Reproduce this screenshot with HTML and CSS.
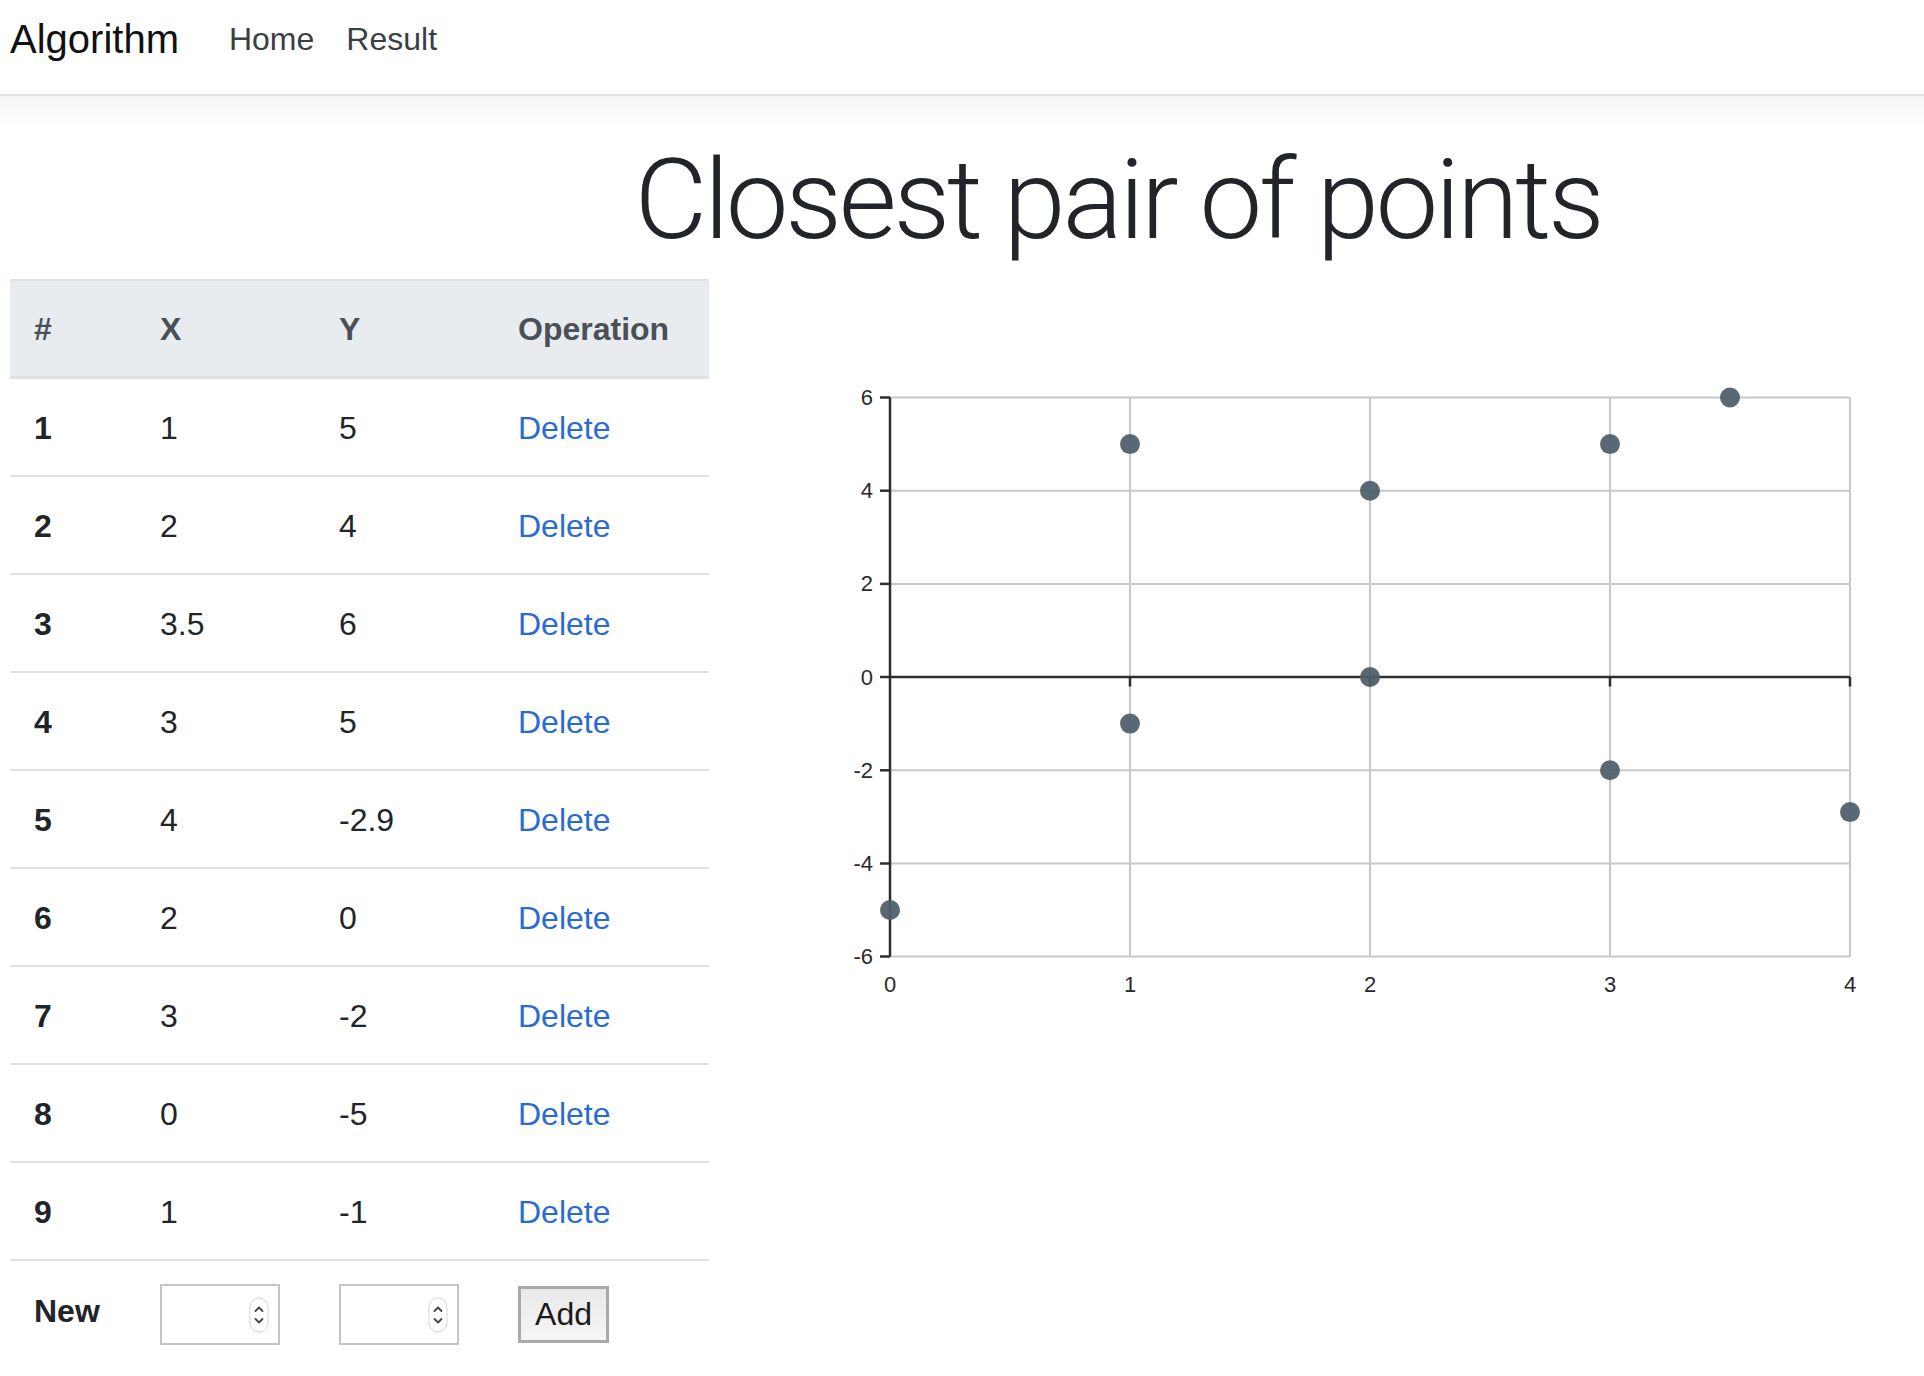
FILE: index.html
```html
<!DOCTYPE html>
<html lang="en">
<head>
    <meta charset="UTF-8">
    <meta name="viewport" content="width=device-width, initial-scale=1.0">
    <title>Closest pair of points</title>
    <link rel="stylesheet" href="styles.css">
</head>
<body>
    <nav class="navbar">
        <a class="brand" href="#">Algorithm</a>
        <a class="nav-link" href="#">Home</a>
        <a class="nav-link" href="#">Result</a>
    </nav>

    <main class="page">
        <h1 class="title">Closest pair of points</h1>

        <div class="content">
            <table class="points">
                <colgroup>
                    <col style="width: 126px">
                    <col style="width: 179px">
                    <col style="width: 179px">
                    <col style="width: 215px">
                </colgroup>
                <thead>
                    <tr>
                        <th>#</th>
                        <th>X</th>
                        <th>Y</th>
                        <th>Operation</th>
                    </tr>
                </thead>
                <tbody>
                    <tr><th>1</th><td>1</td><td>5</td><td><a href="#">Delete</a></td></tr>
                    <tr><th>2</th><td>2</td><td>4</td><td><a href="#">Delete</a></td></tr>
                    <tr><th>3</th><td>3.5</td><td>6</td><td><a href="#">Delete</a></td></tr>
                    <tr><th>4</th><td>3</td><td>5</td><td><a href="#">Delete</a></td></tr>
                    <tr><th>5</th><td>4</td><td>-2.9</td><td><a href="#">Delete</a></td></tr>
                    <tr><th>6</th><td>2</td><td>0</td><td><a href="#">Delete</a></td></tr>
                    <tr><th>7</th><td>3</td><td>-2</td><td><a href="#">Delete</a></td></tr>
                    <tr><th>8</th><td>0</td><td>-5</td><td><a href="#">Delete</a></td></tr>
                    <tr><th>9</th><td>1</td><td>-1</td><td><a href="#">Delete</a></td></tr>
                    <tr class="new-row">
                        <th>New</th>
                        <td>
                            <div class="num-input">
                                <input type="text" id="newX">
                                <svg class="spinner" width="20" height="36" viewBox="0 0 20 36">
                                    <rect x="1" y="1" width="18" height="34" rx="9" fill="#fff" stroke="#d6d6d6"/>
                                    <path d="M6.5 14 L10 10.5 L13.5 14 M6.5 22 L10 25.5 L13.5 22" fill="none" stroke="#444" stroke-width="1.8" stroke-linecap="round" stroke-linejoin="round"/>
                                </svg>
                            </div>
                        </td>
                        <td>
                            <div class="num-input">
                                <input type="text" id="newY">
                                <svg class="spinner" width="20" height="36" viewBox="0 0 20 36">
                                    <rect x="1" y="1" width="18" height="34" rx="9" fill="#fff" stroke="#d6d6d6"/>
                                    <path d="M6.5 14 L10 10.5 L13.5 14 M6.5 22 L10 25.5 L13.5 22" fill="none" stroke="#444" stroke-width="1.8" stroke-linecap="round" stroke-linejoin="round"/>
                                </svg>
                            </div>
                        </td>
                        <td><button type="button" class="add-btn">Add</button></td>
                    </tr>
                </tbody>
            </table>

            <!-- scatter: x 0..4 -> 0..960, y 6..-6 -> 0..559 -->
            <svg class="chart" width="1215" height="740" viewBox="0 0 1215 740">
                <g transform="translate(181,118.5)">
                    <g class="grid">
                        <line x1="0" y1="0" x2="960" y2="0"/>
                        <line x1="0" y1="93.2" x2="960" y2="93.2"/>
                        <line x1="0" y1="186.4" x2="960" y2="186.4"/>
                        <line x1="0" y1="372.8" x2="960" y2="372.8"/>
                        <line x1="0" y1="466" x2="960" y2="466"/>
                        <line x1="0" y1="559" x2="960" y2="559"/>
                        <line x1="240" y1="0" x2="240" y2="559"/>
                        <line x1="480" y1="0" x2="480" y2="559"/>
                        <line x1="720" y1="0" x2="720" y2="559"/>
                        <line x1="960" y1="0" x2="960" y2="559"/>
                    </g>
                    <g class="axis">
                        <line x1="0" y1="279.5" x2="960" y2="279.5"/>
                        <line x1="0" y1="0" x2="0" y2="559"/>
                        <line x1="240" y1="279.5" x2="240" y2="289"/>
                        <line x1="480" y1="279.5" x2="480" y2="289"/>
                        <line x1="720" y1="279.5" x2="720" y2="289"/>
                        <line x1="960" y1="279.5" x2="960" y2="289"/>
                        <line x1="-10" y1="0" x2="0" y2="0"/>
                        <line x1="-10" y1="93.2" x2="0" y2="93.2"/>
                        <line x1="-10" y1="186.4" x2="0" y2="186.4"/>
                        <line x1="-10" y1="279.5" x2="0" y2="279.5"/>
                        <line x1="-10" y1="372.8" x2="0" y2="372.8"/>
                        <line x1="-10" y1="466" x2="0" y2="466"/>
                        <line x1="-10" y1="559" x2="0" y2="559"/>
                    </g>
                    <g class="y-labels">
                        <text x="-17" y="0">6</text>
                        <text x="-17" y="93.2">4</text>
                        <text x="-17" y="186.4">2</text>
                        <text x="-17" y="279.5">0</text>
                        <text x="-17" y="372.8">-2</text>
                        <text x="-17" y="466">-4</text>
                        <text x="-17" y="559">-6</text>
                    </g>
                    <g class="x-labels">
                        <text x="0" y="587">0</text>
                        <text x="240" y="587">1</text>
                        <text x="480" y="587">2</text>
                        <text x="720" y="587">3</text>
                        <text x="960" y="587">4</text>
                    </g>
                    <g class="dots">
                        <circle cx="240" cy="46.6" r="10"/>
                        <circle cx="480" cy="93.2" r="10"/>
                        <circle cx="840" cy="0" r="10"/>
                        <circle cx="720" cy="46.6" r="10"/>
                        <circle cx="960" cy="414.6" r="10"/>
                        <circle cx="480" cy="279.5" r="10"/>
                        <circle cx="720" cy="372.8" r="10"/>
                        <circle cx="0" cy="512.5" r="10"/>
                        <circle cx="240" cy="326.1" r="10"/>
                    </g>
                </g>
            </svg>
        </div>
    </main>
</body>
</html>
```

FILE: styles.css
```css
body {
    margin: 0;
    font-family: "Liberation Sans", Arial, sans-serif;
    font-size: 32px;
    color: #212529;
    background-color: #fff;
}
a {
    text-decoration: none;
}
.navbar {
    display: flex;
    align-items: center;
    height: 96px;
    padding: 0 10px 16px;
    box-sizing: border-box;
    border-bottom: 2px solid #dfe2e6;
}
.brand {
    font-size: 40px;
    color: #111;
    margin-right: 34px;
}
.nav-link {
    color: #3a3f44;
    padding: 0 16px;
}
.page {
    padding: 37px 0 0 10px;
    background: linear-gradient(#f4f5f6, #fff 30px);
}
.title {
    margin: 0 0 12px 302px;
    text-align: center;
    font-family: Roboto, "Liberation Sans", sans-serif;
    font-weight: 300;
    font-size: 112px;
    line-height: 134px;
    letter-spacing: -3.3px;
    color: #212529;
}
.content {
    display: flex;
    align-items: flex-start;
}
.points {
    width: 699px;
    border-collapse: collapse;
    table-layout: fixed;
    flex: none;
}
.points th,
.points td {
    padding: 25px 24px 23px;
    line-height: 48px;
    text-align: left;
    vertical-align: top;
    border-top: 2px solid #dee2e6;
}
.points th {
    font-weight: bold;
}
.points thead th {
    background-color: #e9ecef;
    color: #495057;
    border-bottom: 3px solid #dee2e6;
    padding-top: 24px;
    padding-bottom: 23px;
}
.points a {
    color: #2a6bd3;
}
.new-row th,
.new-row td {
    vertical-align: middle;
    padding-top: 23px;
    padding-bottom: 21px;
}
.new-row th {
    padding-top: 19px;
    padding-bottom: 25px;
}
.num-input {
    display: flex;
    align-items: center;
    width: 120px;
    height: 61px;
    box-sizing: border-box;
    border: 2px solid #c4c4c4;
    background: #fff;
    padding-right: 9px;
}
.num-input input {
    flex: 1;
    min-width: 0;
    border: none;
    outline: none;
    font-size: 32px;
    font-family: inherit;
    background: transparent;
}
.spinner {
    flex: none;
}
.add-btn {
    width: 91px;
    height: 57px;
    border: 3px solid #a9a9a9;
    background: linear-gradient(#e9e9e9, #f5f5f5);
    font-family: inherit;
    font-size: 32px;
    color: #1a1a1a;
    padding: 0;
}
.chart {
    flex: none;
    display: block;
}
.grid line {
    stroke: #c8c8c8;
    stroke-width: 2;
}
.axis line {
    stroke: #2e2e2e;
    stroke-width: 2.5;
}
.y-labels text,
.x-labels text {
    font-family: "Liberation Sans", Arial, sans-serif;
    font-size: 22px;
    fill: #2a2a2a;
    dominant-baseline: central;
}
.y-labels text {
    text-anchor: end;
}
.x-labels text {
    text-anchor: middle;
}
.dots circle {
    fill: #4d5c69;
    fill-opacity: 0.93;
}
```
